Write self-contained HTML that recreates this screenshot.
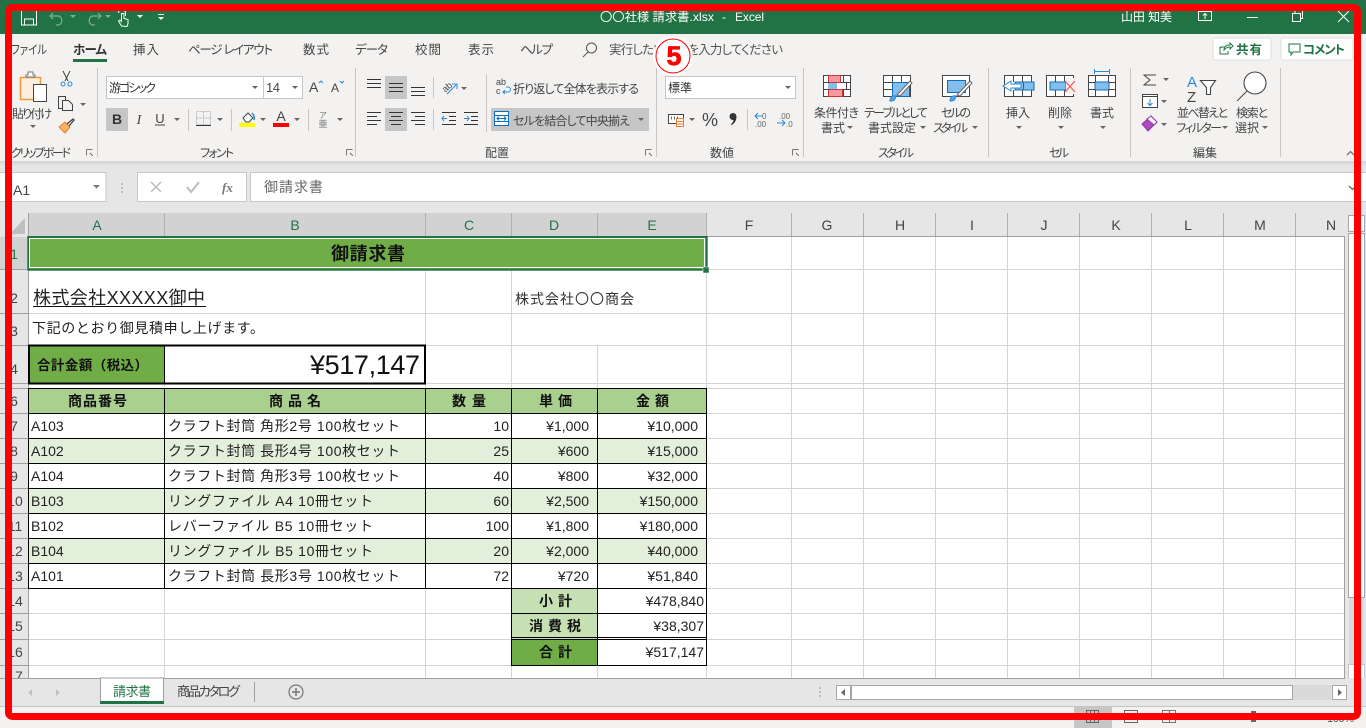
<!DOCTYPE html>
<html lang="ja"><head><meta charset="utf-8"><title>Excel</title>
<style>
html,body{margin:0;padding:0;background:#f3f2f1;overflow:hidden}
svg{display:block;position:absolute;left:0;top:0}
text{font-family:"Liberation Sans","Noto Sans CJK JP",sans-serif;white-space:pre}
.r{font-size:12px;fill:#444;font-feature-settings:"palt"}
.tb{font-size:12.5px;fill:#444;font-feature-settings:"palt"}
.w{font-size:12px;fill:#fff}
.c{font-size:14px;fill:#222}
.b{font-size:14px;fill:#111;font-weight:700}
.h{font-size:14px;fill:#444;text-anchor:middle}
.hs{font-size:14px;fill:#217346;text-anchor:middle}
.n{font-size:14px;fill:#222;text-anchor:end}
.m{text-anchor:middle}
.ln{shape-rendering:crispEdges;fill:none}
</style></head><body>
<svg width="1366" height="728" viewBox="0 0 1366 728" xmlns="http://www.w3.org/2000/svg">
<rect width="1366" height="728" fill="#f3f2f1"/>
<!-- title bar -->
<rect width="1366" height="34" fill="#217346"/>
<g fill="none" stroke="#fff" stroke-width="1">
<path d="M21.5 8v17h15V8M24.5 25v-6h9v6"/>
<path d="M118.5 13a3.5 3.5 0 0 1 7 0v3M121.5 26l-3-5 1.500-1 1.500 1.500v-8h2.500v5l4 1v4l-1 3z"/>
<path d="M1198.500 11.500h13v9h-13zM1205 19v-5M1203 15.500l2-2 2 2"/>
<path d="M1247 17.500h11"/>
<path d="M1292.500 13.500h8v8h-8zM1295 13v-2.500h7.500v8h-2"/>
<path d="M1338 11l11 11M1349 11l-11 11"/>
</g>
<g fill="none" stroke="#7fae93" stroke-width="1.200"><path d="M53 13l-3 3 3 3M50 16h9a5 5 0 0 1 0 9h-3"/><path d="M98 13l3 3-3 3M101 16h-9a5 5 0 0 0 0 9h3"/></g>
<path d="M70 15h6l-3 3zM105 15h6l-3 3z" fill="#7fae93"/>
<path d="M137 15h6l-3 3zM158 14h6v1h-6zM158 17h6l-3 3z" fill="#fff"/>
<text class="w" x="600" y="21" textLength="114" lengthAdjust="spacingAndGlyphs">〇〇社様 請求書.xlsx</text>
<text class="w" x="722" y="21">-</text>
<text class="w" x="735" y="21" textLength="29">Excel</text>
<text class="w" x="1121" y="21" textLength="51">山田 知美</text>
<!-- tabs -->
<text class="tb" x="11" y="54" textLength="36" lengthAdjust="spacingAndGlyphs">ファイル</text>
<text class="tb" x="73" y="54" textLength="34" style="font-weight:700;fill:#333">ホーム</text>
<rect x="73" y="59" width="34" height="3" fill="#217346"/>
<text class="tb" x="133" y="54" textLength="26">挿入</text>
<text class="tb" x="188" y="54" textLength="85">ページ レイアウト</text>
<text class="tb" x="303" y="54" textLength="26">数式</text>
<text class="tb" x="355" y="54" textLength="33">データ</text>
<text class="tb" x="415" y="54" textLength="26">校閲</text>
<text class="tb" x="468" y="54" textLength="26">表示</text>
<text class="tb" x="520" y="54" textLength="33">ヘルプ</text>
<circle cx="591.500" cy="48" r="5" fill="none" stroke="#555" stroke-width="1"/><path d="M588 52l-5 5" stroke="#555"/>
<text class="tb" x="609" y="54" textLength="174" style="fill:#555">実行したい作業を入力してください</text>
<rect x="1213" y="38" width="58" height="22" rx="2" fill="#fff" stroke="#e1dfdd"/>
<rect x="1281" y="38" width="72" height="22" rx="2" fill="#fff" stroke="#e1dfdd"/>
<path d="M1221 48v-1h3M1228 51v3h-8v-7M1224 50c0-4 3-5 6-5v-2l3 3-3 3v-2c-3 0-4 1-6 3z" fill="none" stroke="#217346"/>
<text class="tb" x="1236" y="54" textLength="26" style="font-weight:700;fill:#217346">共有</text>
<path d="M1289 44h11v8h-7l-2 3v-3h-2z" fill="none" stroke="#217346"/>
<text class="tb" x="1303" y="54" textLength="42" style="font-weight:700;fill:#217346">コメント</text>
<!-- group separators -->
<path class="ln" stroke="#c8c6c4" d="M97.500 68v89M355.500 68v89M656.500 68v89M803.500 68v89M988.500 68v89M1130.500 68v89M1280.500 68v89M188.500 109v22M231.500 109v22M308.500 109v22M433.500 77v21M433.500 109v21M486.500 74v58M747.500 109v21"/>
<!-- clipboard -->
<rect x="20.500" y="77.500" width="20" height="22" fill="#fbeedd" stroke="#ed9a3e" stroke-width="1.500"/>
<path d="M26 77h9v-2h-2v-3h-5v3h-2z" fill="#fff" stroke="#777"/>
<rect x="33.500" y="84.500" width="13" height="17" fill="#fff" stroke="#444"/>
<text class="r" x="12" y="118" textLength="40">貼り付け</text>
<path d="M30 125h6l-3 3z" fill="#666"/>
<path d="M63 71l5 10M70 71l-5 10" stroke="#444" fill="none"/><circle cx="63" cy="84" r="2" fill="none" stroke="#2b88d8"/><circle cx="70" cy="84" r="2" fill="none" stroke="#2b88d8"/>
<path d="M58.500 96.500h7v12h-7z" fill="none" stroke="#444"/><path d="M62.500 100.500h6l4 4v6h-10z" fill="#f3f2f1" stroke="#444"/>
<path d="M80 103h6l-3 3z" fill="#666"/>
<path d="M59 127l6-5 5 5-5 6z" fill="#f7b267" stroke="#ed7d31"/><path d="M67 124l6-5 1 1-5 6" fill="none" stroke="#444" stroke-width="1.300"/>
<text class="r" x="11" y="157" textLength="60">クリップボード</text>
<!-- launchers -->
<g fill="none" stroke="#777"><path class="ln" d="M86.500 149.500h6M86.500 149.500v6M90 153l3 3M346.500 149.500h6M346.500 149.500v6M350 153l3 3M645.500 149.500h6M645.500 149.500v6M649 153l3 3M792.500 149.500h6M792.500 149.500v6M796 153l3 3"/></g>
<!-- font group -->
<rect x="106.500" y="76.500" width="157" height="22" fill="#fff" stroke="#c6c6c6"/>
<rect x="263.500" y="76.500" width="39" height="22" fill="#fff" stroke="#c6c6c6"/>
<text class="r" x="109" y="92" textLength="47" style="fill:#333">游ゴシック</text>
<text class="r" x="266" y="92" textLength="14" style="font-size:13px">14</text>
<path d="M252 86h6l-3 3zM292 86h6l-3 3z" fill="#666"/>
<text class="r" x="309" y="92" style="font-size:14px">A</text>
<path d="M319 83l2-2 2 2" fill="none" stroke="#2b88d8"/>
<text class="r" x="331" y="92" style="font-size:12px">A</text>
<path d="M340 81l2 2 2-2" fill="none" stroke="#2b88d8"/>
<rect x="106" y="108" width="22" height="23" fill="#c6c6c6"/>
<text class="r m" x="117" y="124" style="font-size:14px;font-weight:700;fill:#333">B</text>
<text class="r m" x="139" y="124" style="font-size:14px;font-style:italic;font-family:'Liberation Serif',serif">I</text>
<text class="r m" x="160" y="123" style="font-size:13px">U</text>
<path d="M155 125h10" stroke="#444"/>
<path d="M174 118h6l-3 3zM217 118h6l-3 3zM260 118h6l-3 3zM294 118h6l-3 3zM337 118h6l-3 3z" fill="#666"/>
<path d="M196.500 111.500h14v13h-14zM203.500 111.500v13M196.500 118h14" fill="none" stroke="#bbb" stroke-dasharray="2 1"/>
<path d="M196 125.500h15" stroke="#333"/>
<path d="M243 118l5-5 5 5-4 4h-3z" fill="#fff" stroke="#444"/><path d="M252 113c2 2 3 4 2 7" fill="none" stroke="#2b88d8" stroke-width="1.500"/>
<rect x="239" y="123" width="16" height="4" fill="#ffff00"/>
<text class="r m" x="281" y="121" style="font-size:14px">A</text>
<rect x="273" y="123" width="16" height="4" fill="#f00"/>
<text class="r m" x="323" y="118" style="font-size:8px;fill:#777">ア</text>
<text class="r m" x="323" y="127" style="font-size:9px;fill:#777">亜</text>
<text class="r" x="200" y="157" textLength="34">フォント</text>
<!-- align -->
<rect x="385" y="76" width="22" height="23" fill="#c6c6c6"/>
<rect x="385" y="108" width="22" height="23" fill="#c6c6c6"/>
<path class="ln" stroke="#333" d="M367 79.500h14M367 83.500h14M367 87.500h14M389 83.500h14M389 87.500h14M389 91.500h14M411 87.500h14M411 91.500h14M411 95.500h14M367 112.500h14M367 116.500h10M367 120.500h14M367 124.500h10M389 112.500h14M391 116.500h10M389 120.500h14M391 124.500h10M411 112.500h14M415 116.500h10M411 120.500h14M415 124.500h10"/>
<text x="441" y="89" style="font-size:9px;fill:#444" transform="rotate(-40 448 85)">ab</text>
<path d="M447 94l9-9M452 84h5v5" fill="none" stroke="#2b88d8"/>
<path d="M461 87h6l-3 3z" fill="#666"/>
<path class="ln" stroke="#333" d="M442 112.500h14M449 116.500h7M449 120.500h7M442 124.500h14M464 112.500h14M471 116.500h7M471 120.500h7M464 124.500h14"/>
<path d="M447 118.500h-5M444 116l-2 2.500 2 2.500M464 118.500h5M467 116l2 2.500-2 2.500" fill="none" stroke="#2b88d8"/>
<text x="496" y="85" style="font-size:9px;fill:#444">ab</text>
<text x="496" y="94" style="font-size:9px;fill:#444">c</text>
<path d="M503 92h5a2.500 2.500 0 0 0 0-5h-2M505 90l-2 2 2 2" fill="none" stroke="#2b88d8"/>
<text class="r" x="513" y="93" textLength="126">折り返して全体を表示する</text>
<rect x="491" y="108" width="158" height="23" fill="#c6c6c6"/>
<path d="M494.500 111.500h14v14h-14z" fill="#fff" stroke="#106ebe"/>
<path class="ln" stroke="#106ebe" d="M494 115.500h15M494 121.500h15"/>
<path d="M497 118.500h9M499 116.500l-2 2 2 2M504 116.500l2 2-2 2" fill="none" stroke="#106ebe"/>
<text class="r" x="513" y="125" textLength="117">セルを結合して中央揃え</text>
<path d="M638 118h6l-3 3z" fill="#666"/>
<text class="r" x="485" y="157" textLength="24">配置</text>
<!-- number -->
<rect x="665.500" y="76.500" width="130" height="22" fill="#fff" stroke="#c6c6c6"/>
<text class="r" x="668" y="92" textLength="24" style="fill:#333">標準</text>
<path d="M785 86h6l-3 3zM689 118h6l-3 3z" fill="#666"/>
<path d="M668.500 114.500h15v9h-15z" fill="#fff" stroke="#444"/>
<path d="M671 118h2M674 118h2M677 118h2" stroke="#666" stroke-width="3" stroke-dasharray="1 1"/>
<rect x="676.500" y="118.500" width="7" height="8" fill="#fff" stroke="#ed7d31"/>
<path d="M677 121.500h6M677 124h6" stroke="#ed7d31"/>
<text x="702" y="126" textLength="16" lengthAdjust="spacingAndGlyphs" style="font-size:18px;fill:#444">%</text>
<circle cx="733" cy="116.500" r="3.500" fill="#333"/>
<path d="M736.500 116.500c0 4-2 7-5 8.500l-.5-1c2-1.500 2.500-3 2.500-5z" fill="#333"/>
<text x="762" y="119" style="font-size:8px;fill:#666">0</text><text x="755" y="127" style="font-size:8px;fill:#666">.00</text>
<path d="M763 116h-8M758 113l-3 3 3 3" fill="none" stroke="#2b88d8"/>
<text x="779" y="119" style="font-size:8px;fill:#666">.00</text><text x="786" y="127" style="font-size:8px;fill:#666">.0</text>
<path d="M777 123h8M782 120l3 3-3 3" fill="none" stroke="#2b88d8"/>
<text class="r" x="710" y="157" textLength="24">数値</text>
<!-- styles: conditional -->
<path d="M823.500 75.500h27v21h-27z" fill="#fff" stroke="#444"/>
<rect x="828.500" y="75.500" width="12" height="7" fill="#f9989f" stroke="#d13438"/>
<rect x="828.500" y="89.500" width="14" height="7" fill="#f9989f" stroke="#d13438"/>
<rect x="828" y="83" width="9" height="6" fill="#83beec"/>
<path class="ln" stroke="#444" d="M823 82.500h6M841 82.500h10M823 89.500h6M843 89.500h8M843.500 75v7M843.500 90v7M846.500 82v8"/>
<text class="r" x="814" y="117" textLength="45">条件付き</text>
<text class="r" x="821" y="132" textLength="24">書式</text>
<path d="M847 126h6l-3 3z" fill="#666"/>
<!-- table -->
<path d="M883.500 75.500h27v21h-27z" fill="#fff" stroke="#444"/>
<rect x="892.500" y="82.500" width="17" height="14" fill="#83beec" stroke="#106ebe"/>
<path class="ln" stroke="#444" d="M883 82.500h9M883 89.500h9M892.500 75v7M901.500 75v7"/>
<path d="M890 101c0-4 3-6 6-5l-1 3c-1 2-3 2-5 2z" fill="#5ba6e0" stroke="#2b88d8"/>
<path d="M897 95l13-14 2 2-12 13z" fill="#fff" stroke="#666"/>
<text class="r" x="864" y="117" textLength="64">テーブルとして</text>
<text class="r" x="868" y="132" textLength="48">書式設定</text>
<path d="M920 126h6l-3 3z" fill="#666"/>
<!-- cell style -->
<path d="M942.500 75.500h27v21h-27z" fill="#fff" stroke="#444"/>
<rect x="947.500" y="80.500" width="18" height="12" fill="#83beec" stroke="#106ebe"/>
<path d="M950 101c0-4 3-6 6-5l-1 3c-1 2-3 2-5 2z" fill="#5ba6e0" stroke="#2b88d8"/>
<path d="M957 95l13-14 2 2-12 13z" fill="#fff" stroke="#666"/>
<text class="r" x="941" y="117" textLength="30">セルの</text>
<text class="r" x="933" y="132" textLength="35">スタイル</text>
<path d="M972 126h6l-3 3z" fill="#666"/>
<text class="r" x="878" y="157" textLength="36">スタイル</text>
<!-- cells -->
<path d="M1004.500 75.500h27v21h-27z" fill="#fff" stroke="#444"/>
<rect x="1015" y="82" width="19" height="8" fill="#83beec" stroke="#106ebe"/>
<path d="M1023.500 82v8" stroke="#106ebe"/>
<path d="M1011 81l-8 5 8 5v-3h10v-4h-10z" fill="#fff" stroke="#2b88d8"/>
<path class="ln" stroke="#444" d="M1013.500 90v7M1022.500 90v7M1013.500 75v7M1022.500 75v7"/>
<text class="r" x="1006" y="117" textLength="24">挿入</text>
<path d="M1016 126h6l-3 3z" fill="#666"/>
<path d="M1046.500 75.500h27v21h-27z" fill="#fff" stroke="#444"/>
<path class="ln" stroke="#444" d="M1055.500 75v7M1064.500 75v7M1055.500 90v7M1064.500 90v7"/>
<rect x="1050" y="82" width="16" height="8" fill="#83beec" stroke="#106ebe"/>
<rect x="1066" y="78" width="10" height="16" fill="#f3f2f1"/>
<path d="M1065 81l10 11M1075 81l-10 11" stroke="#f06060" stroke-width="1.300"/>
<text class="r" x="1048" y="117" textLength="24">削除</text>
<path d="M1058 126h6l-3 3z" fill="#666"/>
<path d="M1088.500 75.500h27v21h-27z" fill="#fff" stroke="#444"/>
<rect x="1095" y="82" width="14" height="8" fill="#83beec" stroke="#106ebe"/>
<path class="ln" stroke="#444" d="M1088 82.500h7M1109 82.500h7M1088 89.500h7M1109 89.500h7M1095.500 75v7M1108.500 75v7M1095.500 90v7M1108.500 90v7"/>
<path class="ln" stroke="#2b88d8" d="M1094 71.500h16M1094.500 69v5M1109.500 69v5"/>
<text class="r" x="1090" y="117" textLength="24">書式</text>
<path d="M1100 126h6l-3 3z" fill="#666"/>
<text class="r" x="1049" y="157" textLength="20">セル</text>
<!-- edit -->
<path d="M1156 75h-12l6 5-6 5h12" fill="none" stroke="#444"/>
<path d="M1163 78h6l-3 3zM1161 100h6l-3 3zM1161 123h6l-3 3z" fill="#666"/>
<rect x="1142.500" y="94.500" width="15" height="13" fill="#fff" stroke="#444"/><path d="M1142 96.500h16" stroke="#444"/>
<path d="M1150 99v6M1147.500 103l2.500 2.500 2.500-2.500" fill="none" stroke="#2b88d8"/>
<path d="M1142 124l9-8 6 6-9 9z" fill="#b146c2" stroke="#8e3aa0"/><path d="M1147 119l4-3 6 6-3 3z" fill="#fff" stroke="#8e3aa0"/>
<text x="1187" y="87" style="font-size:15px;fill:#2b88d8">A</text>
<text x="1187" y="102" style="font-size:15px;fill:#444">Z</text>
<path d="M1200.500 80.500h15l-5 7v7h-4v-7z" fill="#fff" stroke="#444" stroke-width="1.100"/>
<circle cx="1255" cy="83" r="11" fill="#fff" stroke="#444" stroke-width="1.100"/><path d="M1247 91l-10 10" stroke="#444"/>
<text class="r" x="1177" y="117" textLength="51">並べ替えと</text>
<text class="r" x="1176" y="132" textLength="46">フィルター</text>
<path d="M1222 126h6l-3 3z" fill="#666"/>
<text class="r" x="1236" y="117" textLength="32">検索と</text>
<text class="r" x="1235" y="132" textLength="24">選択</text>
<path d="M1262 126h6l-3 3z" fill="#666"/>
<text class="r" x="1193" y="157" textLength="24">編集</text>
<path d="M1347 155l3.500-3.500 3.500 3.500" fill="none" stroke="#777" stroke-width="1.300"/>
<!-- formula bar -->
<rect y="158" width="1366" height="4" fill="#f3f2f1"/>
<rect y="161" width="1366" height="52" fill="#e6e6e6"/>
<rect y="161" width="1366" height="2" fill="#d6d6d6"/>
<rect y="163" width="1366" height="2" fill="#dfdfdf"/>
<rect x="-2" y="172.500" width="108" height="29" fill="#fff" stroke="#c6c6c6"/>
<text x="13" y="195" style="font-size:14px;fill:#444">A1</text>
<path d="M93 185h7l-3.500 3.500z" fill="#777"/>
<path d="M122 183v2M122 187v2M122 191v2" stroke="#b0b0b0" stroke-width="1.500"/>
<rect x="137.500" y="172.500" width="109" height="29" fill="#fff" stroke="#c6c6c6"/>
<rect x="250.500" y="172.500" width="1120" height="29" fill="#fff" stroke="#c6c6c6"/>
<path d="M151 182l10 10M161 182l-10 10" stroke="#bbb" stroke-width="1.500"/>
<path d="M187 187l4 5 8-10" fill="none" stroke="#bbb" stroke-width="2"/>
<text x="222" y="192" style="font-size:13px;font-style:italic;font-weight:700;fill:#777;font-family:'Liberation Serif',serif">fx</text>
<text x="264" y="192" textLength="59" style="font-size:14px;fill:#666">御請求書</text>
<path d="M1349 186l3.500 3.500 3.500-3.500" fill="none" stroke="#666" stroke-width="1.300"/>
<!-- sheet -->
<rect x="29" y="237" width="1316" height="441" fill="#fff"/>
<rect x="0" y="213" width="29" height="465" fill="#e6e6e6"/>
<rect x="0" y="237" width="28" height="33" fill="#d2d2d2"/>
<rect x="0" y="213" width="1345" height="24" fill="#e6e6e6"/>
<rect x="29" y="213" width="678" height="24" fill="#d2d2d2"/>
<path d="M25 218v16H10z" fill="#bfbfbf"/>
<path class="ln" stroke="#b0b0b0" d="M164.500 213v24M425.500 213v24M511.500 213v24M597.500 213v24M706.500 213v24M791.500 213v24M863.500 213v24M935.500 213v24M1007.500 213v24M1079.500 213v24M1151.500 213v24M1223.500 213v24M1295.500 213v24"/>
<path class="ln" stroke="#9f9f9f" d="M28.500 213v465M707 236.500h638M1344.500 237v441M0 269.500h28M0 313.500h28M0 345.500h28M0 383.500h28M0 388.500h28M0 413.500h28M0 438.500h28M0 463.500h28M0 488.500h28M0 513.500h28M0 538.500h28M0 563.500h28M0 588.500h28M0 613.500h28M0 639.500h28M0 665.500h28"/>
<!-- grid lines -->
<path class="ln" stroke="#d4d4d4" d="M29 269.500h1315M29 313.500h1315M29 345.500h1315M29 383.500h1315M29 388.500h1315M29 413.500h1315M29 438.500h1315M29 463.500h1315M29 488.500h1315M29 513.500h1315M29 538.500h1315M29 563.500h1315M29 588.500h1315M29 613.500h1315M29 639.500h1315M29 665.500h1315M164.500 345v333M425.500 270v408M511.500 270v408M597.500 345v333M706.500 270v408M791.500 237v441M863.500 237v441M935.500 237v441M1007.500 237v441M1079.500 237v441M1151.500 237v441M1223.500 237v441M1295.500 237v441"/>
<!-- fills -->
<rect x="29" y="237" width="678" height="33" fill="#70ad47"/>
<rect x="29" y="346" width="136" height="37" fill="#70ad47"/>
<rect x="165" y="346" width="260" height="37" fill="#fff"/>
<rect x="29" y="389" width="678" height="25" fill="#a9d08e"/>
<rect x="29" y="414" width="678" height="25" fill="#fff"/>
<rect x="29" y="439" width="678" height="25" fill="#e2efda"/>
<rect x="29" y="464" width="678" height="25" fill="#fff"/>
<rect x="29" y="489" width="678" height="25" fill="#e2efda"/>
<rect x="29" y="514" width="678" height="25" fill="#fff"/>
<rect x="29" y="539" width="678" height="25" fill="#e2efda"/>
<rect x="29" y="564" width="678" height="25" fill="#fff"/>
<rect x="512" y="589" width="86" height="50" fill="#c6e0b4"/>
<rect x="512" y="640" width="86" height="26" fill="#70ad47"/>
<rect x="598" y="589" width="109" height="77" fill="#fff"/>
<!-- black borders -->
<path class="ln" stroke="#000" d="M28 388.500h679M28 413.500h679M28 438.500h679M28 463.500h679M28 488.500h679M28 513.500h679M28 538.500h679M28 563.500h679M28 588.500h679M511 613.500h196M511 637.500h196M511 639.500h196M511 665.500h196M28.500 388v201M164.500 388v201M425.500 388v201M511.500 388v278M597.500 388v278M706.500 388v278"/>
<path class="ln" stroke="#000" d="M164.500 346v37"/>
<rect x="29" y="345.500" width="396" height="38" fill="none" stroke="#000" stroke-width="2" class="ln"/>
<!-- selection -->
<rect x="28.300" y="237" width="678.400" height="32.700" fill="none" stroke="#217346" stroke-width="2"/>
<rect x="29.500" y="238.500" width="675" height="29" fill="none" stroke="#fff" class="ln"/>
<rect x="703" y="267" width="6" height="6" fill="#217346" stroke="#fff" stroke-width=".5"/>
<!-- headers text -->
<text class="hs" x="97" y="230">A</text><text class="hs" x="295" y="230">B</text><text class="hs" x="469" y="230">C</text><text class="hs" x="554" y="230">D</text><text class="hs" x="652" y="230">E</text>
<text class="h" x="749" y="230">F</text><text class="h" x="827" y="230">G</text><text class="h" x="900" y="230">H</text><text class="h" x="972" y="230">I</text><text class="h" x="1044" y="230">J</text><text class="h" x="1116" y="230">K</text><text class="h" x="1188" y="230">L</text><text class="h" x="1260" y="230">M</text><text class="h" x="1331" y="230">N</text>
<text class="hs" x="14" y="259">1</text>
<text class="h" x="14" y="303">2</text><text class="h" x="14" y="336">3</text><text class="h" x="14" y="374">4</text><text class="h" x="14" y="406">6</text><text class="h" x="14" y="431">7</text><text class="h" x="14" y="456">8</text><text class="h" x="14" y="481">9</text>
<text class="h" x="15" y="506">10</text><text class="h" x="15" y="531">11</text><text class="h" x="15" y="556">12</text><text class="h" x="15" y="581">13</text><text class="h" x="15" y="606">14</text><text class="h" x="15" y="631">15</text><text class="h" x="15" y="657">16</text><text class="h" x="15" y="681">17</text>
<!-- cell text -->
<text x="331" y="260" textLength="74" style="font-size:18px;font-weight:700;fill:#111">御請求書</text>
<text x="33" y="304" textLength="172" style="font-size:18px;fill:#222">株式会社XXXXX御中</text>
<path class="ln" stroke="#111" d="M33 306.500h173"/>
<text x="515" y="304" textLength="119" style="font-size:14px;fill:#333">株式会社〇〇商会</text>
<text x="32" y="333" textLength="232" style="font-size:14px;fill:#222">下記のとおり御見積申し上げます。</text>
<text class="b" x="37" y="370" textLength="111" style="font-size:13.500px">合計金額（税込）</text>
<text x="310" y="374" textLength="110" style="font-size:27px;fill:#111">¥517,147</text>
<text class="b" x="68" y="406" textLength="59">商品番号</text>
<text class="b" x="269" y="406" textLength="52">商 品 名</text>
<text class="b" x="452" y="406" textLength="34">数 量</text>
<text class="b" x="539" y="406" textLength="33">単 価</text>
<text class="b" x="636" y="406" textLength="33">金 額</text>
<text class="c" x="31" y="431">A103</text><text class="c" x="168" y="431" textLength="232">クラフト封筒 角形2号 100枚セット</text><text class="n" x="509" y="431">10</text><text class="n" x="589" y="431">¥1,000</text><text class="n" x="698" y="431">¥10,000</text>
<text class="c" x="31" y="456">A102</text><text class="c" x="168" y="456" textLength="232">クラフト封筒 長形4号 100枚セット</text><text class="n" x="509" y="456">25</text><text class="n" x="589" y="456">¥600</text><text class="n" x="698" y="456">¥15,000</text>
<text class="c" x="31" y="481">A104</text><text class="c" x="168" y="481" textLength="232">クラフト封筒 角形3号 100枚セット</text><text class="n" x="509" y="481">40</text><text class="n" x="589" y="481">¥800</text><text class="n" x="698" y="481">¥32,000</text>
<text class="c" x="31" y="506">B103</text><text class="c" x="168" y="506" textLength="205">リングファイル A4 10冊セット</text><text class="n" x="509" y="506">60</text><text class="n" x="589" y="506">¥2,500</text><text class="n" x="698" y="506">¥150,000</text>
<text class="c" x="31" y="531">B102</text><text class="c" x="168" y="531" textLength="205">レバーファイル B5 10冊セット</text><text class="n" x="509" y="531">100</text><text class="n" x="589" y="531">¥1,800</text><text class="n" x="698" y="531">¥180,000</text>
<text class="c" x="31" y="556">B104</text><text class="c" x="168" y="556" textLength="205">リングファイル B5 10冊セット</text><text class="n" x="509" y="556">20</text><text class="n" x="589" y="556">¥2,000</text><text class="n" x="698" y="556">¥40,000</text>
<text class="c" x="31" y="581">A101</text><text class="c" x="168" y="581" textLength="232">クラフト封筒 長形3号 100枚セット</text><text class="n" x="509" y="581">72</text><text class="n" x="589" y="581">¥720</text><text class="n" x="698" y="581">¥51,840</text>
<text class="b" x="539" y="606" textLength="33">小 計</text><text class="n" x="704" y="606">¥478,840</text>
<text class="b" x="529" y="631" textLength="52">消 費 税</text><text class="n" x="704" y="631">¥38,307</text>
<text class="b" x="539" y="657" textLength="33">合 計</text><text class="n" x="704" y="657">¥517,147</text>
<!-- v scrollbar -->
<rect x="1345" y="213" width="21" height="465" fill="#e6e6e6"/>
<rect x="1348.500" y="215.500" width="16" height="16" fill="#fff" stroke="#a6a6a6"/>
<rect x="1348.500" y="233.500" width="16" height="364" fill="#fff" stroke="#a6a6a6"/>
<rect x="1349" y="598" width="15" height="66" fill="#dadada"/>
<rect x="1348.500" y="664.500" width="16" height="14" fill="#fff" stroke="#c6c6c6"/>
<!-- sheet tabs -->
<rect y="678" width="1366" height="29" fill="#e6e6e6"/>
<path class="ln" stroke="#9f9f9f" d="M0 678.500h1345"/>
<path class="ln" stroke="#c6c6c6" d="M0 706.500h1366"/>
<path d="M32 689v7l-4-3.500zM56 689v7l4-3.500z" fill="#c0c0c0"/>
<rect x="100.500" y="678" width="63" height="24" fill="#fff" stroke="#9f9f9f"/>
<rect x="100" y="701" width="64" height="3" fill="#217346"/>
<text x="113" y="696" textLength="38" style="font-size:13px;fill:#217346">請求書</text>
<text x="177" y="696" textLength="63" style="font-size:13px;fill:#444;font-feature-settings:'palt'">商品カタログ</text>
<path class="ln" stroke="#9f9f9f" d="M254.500 682v20"/>
<circle cx="296" cy="692" r="7" fill="none" stroke="#777" stroke-width="1.200"/>
<path d="M292 692h8M296 688v8" stroke="#777" stroke-width="1.500"/>
<path d="M820 687v2M820 691v2M820 695v2" stroke="#b0b0b0" stroke-width="1.500"/>
<rect x="1293" y="685" width="38" height="15" fill="#dadada"/>
<rect x="836.500" y="685.500" width="14" height="14" fill="#fff" stroke="#a6a6a6"/>
<path d="M845 689v7l-4-3.500z" fill="#666"/>
<rect x="851.500" y="685.500" width="441" height="14" fill="#fff" stroke="#a6a6a6"/>
<rect x="1332.500" y="685.500" width="14" height="14" fill="#fff" stroke="#a6a6a6"/>
<path d="M1338 689v7l4-3.500z" fill="#666"/>
<!-- status -->
<rect y="707" width="1366" height="21" fill="#f3f2f1"/>
<rect x="1074" y="707" width="38" height="21" fill="#c6c6c6"/>
<path d="M1086.500 710.500h12v12h-12zM1090.500 710.500v12M1094.500 710.500v12M1086.500 716.500h12" fill="none" stroke="#666" class="ln"/>
<path d="M1124.500 710.500h13v12h-13z" fill="none" stroke="#666" class="ln"/><rect x="1127" y="713" width="8" height="7" fill="#888"/>
<path d="M1162.500 710.500h13v12h-13zM1169.500 710.500v12M1162.500 716.500h13" fill="none" stroke="#777" class="ln"/>
<rect x="1251" y="711" width="5" height="11" fill="#666"/>
<text x="1327" y="722" textLength="27" style="font-size:11px;fill:#555">100%</text>
<!-- number badge -->
<circle cx="673" cy="56" r="20" fill="#fff" fill-opacity=".9"/>
<circle cx="673" cy="56" r="17" fill="#fff" fill-opacity=".2" stroke="#f00" stroke-width="1"/>
<circle cx="673" cy="56" r="14" fill="#fff" fill-opacity=".5"/>
<text x="674" y="65" text-anchor="middle" style="font-size:27px;font-weight:700;fill:#f00;stroke:#fff;stroke-width:3px;paint-order:stroke">5</text>
<text x="674" y="65" text-anchor="middle" style="font-size:27px;font-weight:700;fill:#f00;stroke:#f00;stroke-width:.7px">5</text>
<!-- red frame -->
<rect x="8.500" y="7.500" width="1349" height="709" rx="4" fill="none" stroke="#f00" stroke-width="7"/>
</svg>
</body></html>
